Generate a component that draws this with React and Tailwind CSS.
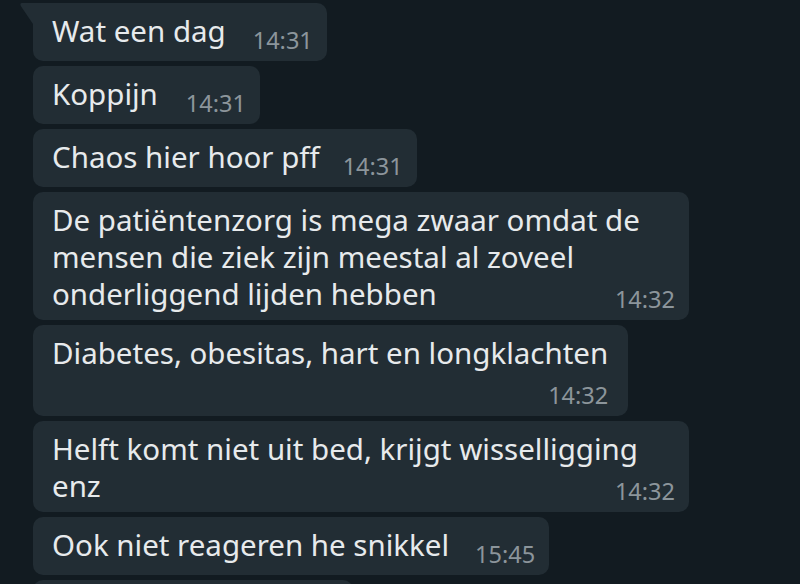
import React from "react";

const Time = ({ children }) => (
  <span className="text-[23.5px] leading-[20px] mb-[3px] text-[#8c959b] whitespace-nowrap">
    {children}
  </span>
);

function Bubble({
  lines,
  time,
  mode = "inline",
  gap = "ml-[30px]",
  tail = false,
  wide = false,
  pr = "pr-[14px]",
}) {
  return (
    <div
      className={`relative bg-[#222d34] pl-[19px] ${pr} pt-[9px] pb-[8px] text-[#e7eaec] ${
        tail ? "rounded-[10px] rounded-tl-none" : "rounded-[10px]"
      } ${wide ? "w-[656px]" : ""}`}
    >
      {tail && (
        <svg
          className="absolute left-[-13px] top-0"
          width="13"
          height="22"
          viewBox="0 0 13 22"
        >
          <path d="M2 0 H13 V21 L0.8 3 Q-0.4 0 2 0 Z" fill="#222d34" />
        </svg>
      )}
      {mode === "inline" && (
        <div className="flex items-end">
          <span className="text-[29.5px] leading-[37px] pb-[4px] whitespace-nowrap">{lines[0]}</span>
          <span className={gap + " flex"}>
            <Time>{time}</Time>
          </span>
        </div>
      )}
      {mode === "lastline" && (
        <div className="flex flex-col">
          {lines.slice(0, -1).map((l, i) => (
            <span key={i} className="text-[29.5px] leading-[37px] whitespace-nowrap">
              {l}
            </span>
          ))}
          <div className="flex items-end justify-between">
            <span className="text-[29.5px] leading-[37px] whitespace-nowrap">
              {lines[lines.length - 1]}
            </span>
            <Time>{time}</Time>
          </div>
        </div>
      )}
      {mode === "below" && (
        <div className="flex flex-col">
          {lines.map((l, i) => (
            <span key={i} className="text-[29.5px] leading-[37px] whitespace-nowrap">
              {l}
            </span>
          ))}
          <div className="flex justify-end mt-[14px]">
            <Time>{time}</Time>
          </div>
        </div>
      )}
    </div>
  );
}

export default function App() {
  return (
    <div
      className="w-[800px] h-[584px] overflow-hidden bg-[#121b21] pt-[3px] pl-[33px] flex flex-col items-start gap-[5px]"
      style={{ fontFamily: '"Noto Sans", "Open Sans", sans-serif' }}
    >
      <Bubble tail lines={["Wat een dag"]} time="14:31" gap="ml-[27px]" />
      <Bubble lines={["Koppijn"]} time="14:31" gap="ml-[28px]" />
      <Bubble lines={["Chaos hier hoor pff"]} time="14:31" gap="ml-[23px]" />
      <Bubble
        wide
        mode="lastline"
        lines={[
          "De patiëntenzorg is mega zwaar omdat de",
          "mensen die ziek zijn meestal al zoveel",
          "onderliggend lijden hebben",
        ]}
        time="14:32"
      />
      <Bubble
        mode="below"
        pr="pr-[20px]"
        lines={["Diabetes, obesitas, hart en longklachten"]}
        time="14:32"
      />
      <Bubble
        wide
        mode="lastline"
        lines={["Helft komt niet uit bed, krijgt wisselligging", "enz"]}
        time="14:32"
      />
      <Bubble lines={["Ook niet reageren he snikkel"]} time="15:45" gap="ml-[26px]" />
      <div className="w-[320px] h-[58px] shrink-0 rounded-[10px] bg-[#222d34]" />
    </div>
  );
}
